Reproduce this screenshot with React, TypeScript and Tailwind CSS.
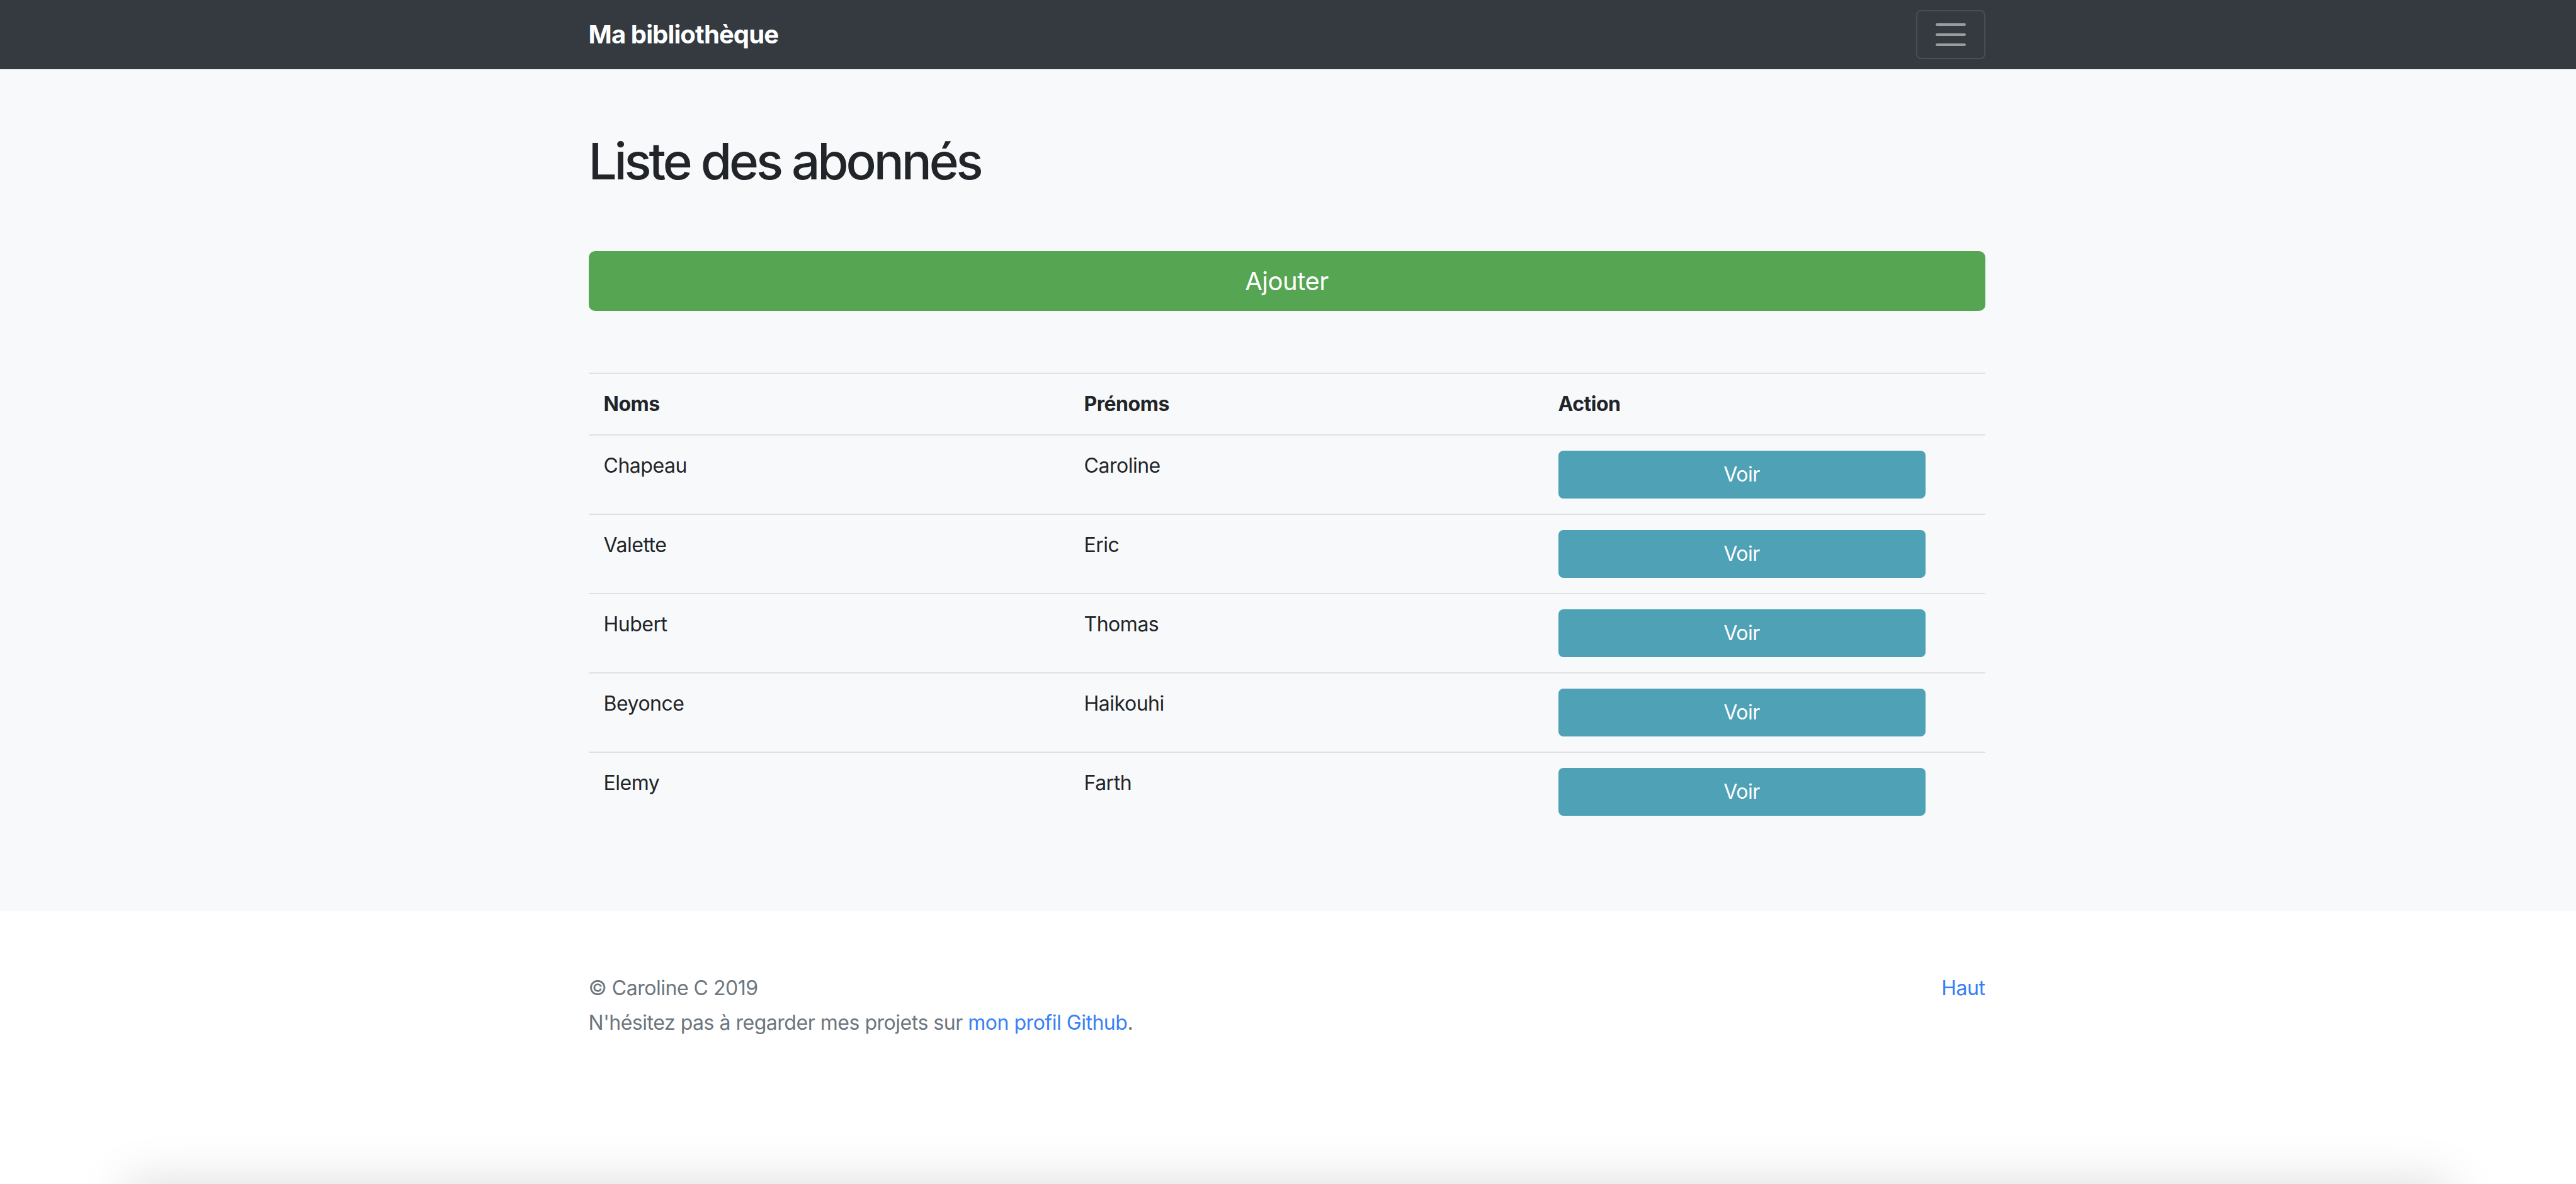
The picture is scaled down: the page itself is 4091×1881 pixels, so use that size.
const abonnes = [
  { nom: "Chapeau", prenom: "Caroline" },
  { nom: "Valette", prenom: "Eric" },
  { nom: "Hubert", prenom: "Thomas" },
  { nom: "Beyonce", prenom: "Haikouhi" },
  { nom: "Elemy", prenom: "Farth" },
];

const App = () => {
  return (
    <div className="h-screen overflow-hidden flex flex-col bg-white text-[#212529] font-['Inter','Liberation_Sans',sans-serif] tracking-[-0.03em]">
      <nav className="bg-[#343a40] h-[110px] shrink-0 pr-[4px]">
        <div className="w-[2218px] mx-auto h-full flex items-center justify-between">
          <a href="#" className="text-white text-[40px] font-bold leading-[60px] tracking-[-0.022em]">
            Ma bibliothèque
          </a>
          <button className="w-[110px] h-[78px] border-2 border-white/10 rounded-[8px] flex items-center justify-center">
            <svg width="60" height="60" viewBox="0 0 30 30">
              <path
                d="M4 7h22M4 15h22M4 23h22"
                stroke="rgba(255,255,255,0.5)"
                strokeWidth="2"
                strokeLinecap="round"
                strokeMiterlimit="10"
              />
            </svg>
          </button>
        </div>
      </nav>

      <main className="bg-[#f8f9fa] pt-[98px] pb-[127px] shrink-0 pr-[4px]">
        <div className="w-[2218px] mx-auto">
          <h1 className="text-[80px] font-medium leading-[96px] tracking-[-0.052em]">Liste des abonnés</h1>
          <button className="mt-[95px] w-full h-[95px] rounded-[10px] bg-[#55a552] text-white text-[40px]">
            Ajouter
          </button>

          <table className="mt-[98px] w-full border-collapse text-[32px] leading-[48px]">
            <thead>
              <tr>
                <th className="w-[763px] text-left font-bold p-[24px] border-t-2 border-[#dee2e6]">Noms</th>
                <th className="w-[753px] text-left font-bold p-[24px] border-t-2 border-[#dee2e6]">Prénoms</th>
                <th className="text-left font-bold p-[24px] border-t-2 border-[#dee2e6]">Action</th>
              </tr>
            </thead>
            <tbody>
              {abonnes.map((a) => (
                <tr key={a.nom}>
                  <td className="p-[24px] align-top border-t-2 border-[#dee2e6]">{a.nom}</td>
                  <td className="p-[24px] align-top border-t-2 border-[#dee2e6]">{a.prenom}</td>
                  <td className="p-[24px] align-top border-t-2 border-[#dee2e6]">
                    <button className="block w-[583px] h-[76px] rounded-[8px] bg-[#4fa1b6] text-white text-[32px]">
                      Voir
                    </button>
                  </td>
                </tr>
              ))}
            </tbody>
          </table>
        </div>
      </main>

      <footer className="pt-[99px] pb-[93px] text-[#6c757d] text-[32px] leading-[48px] shrink-0 pr-[4px]">
        <div className="w-[2218px] mx-auto">
          <div className="flex justify-between mb-[7px]">
            <p>© Caroline C 2019</p>
            <a href="#" className="text-[#3880f6]">Haut</a>
          </div>
          <p>
            N'hésitez pas à regarder mes projets sur{" "}
            <a href="#" className="text-[#3880f6]">mon profil Github</a>.
          </p>
        </div>
      </footer>

      <div className="mt-auto shrink-0 mx-[200px] h-[200px] -mb-[200px] bg-white shadow-[0_0_80px_rgba(0,0,0,0.15)]" />
    </div>
  );
};

export default App;
